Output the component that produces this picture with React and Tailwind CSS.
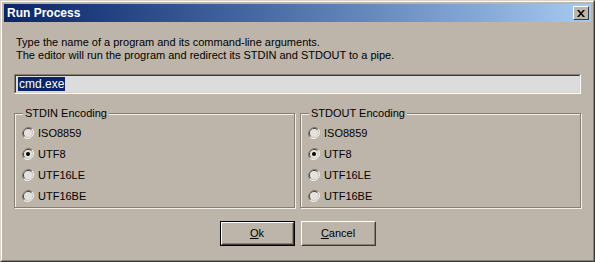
import React from "react";

const font = { fontFamily: '"Liberation Sans", Arial, sans-serif' };

const Radio = ({ checked }) => (
    <svg width="12" height="12" viewBox="0 0 12 12" className="shrink-0">
        <path d="M10.2 1.8 A6 6 0 0 0 1.8 10.2" fill="none" stroke="#807a70" strokeWidth="1" />
        <path d="M1.8 10.2 A6 6 0 0 0 10.2 1.8" fill="none" stroke="#f4f2ee" strokeWidth="1" />
        <path d="M9.5 2.5 A5 5 0 0 0 2.5 9.5" fill="none" stroke="#3c3a36" strokeWidth="1" />
        <path d="M2.5 9.5 A5 5 0 0 0 9.5 2.5" fill="none" stroke="#d6d0c6" strokeWidth="1" />
        <circle cx="6" cy="6" r="4" fill="#e4e2de" />
        {checked && <circle cx="6" cy="6" r="2" fill="#000" />}
    </svg>
);

const Group = ({ title, options, selected }) => (
    <div className="relative flex-1 h-[95px] border border-[#857f74] shadow-[inset_1px_1px_0_#f2efe9,1px_1px_0_#f2efe9]">
        {/* titel over de lijn */}
        <span className="absolute left-[8px] top-[-7px] px-[2px] bg-[#bdb5a9] text-[11px] leading-[13px] text-black">
            {title}
        </span>
        <div className="flex flex-col pt-[13px] pl-[7px] gap-[9px]">
            {options.map((opt) => (
                <div key={opt} className="flex items-center gap-[4px] h-[12px]">
                    <Radio checked={opt === selected} />
                    <span className="text-[11px] leading-[12px] text-black">{opt}</span>
                </div>
            ))}
        </div>
    </div>
);

const Button = ({ children, isDefault }) => (
    <div className={`w-[75px] h-[25px] ${isDefault ? "border border-black" : ""}`}>
        <div className="w-full h-full border border-t-white border-l-white border-r-[#3c3a36] border-b-[#3c3a36]">
            <div className="w-full h-full border border-t-[#bdb5a9] border-l-[#bdb5a9] border-r-[#857f74] border-b-[#857f74] flex items-center justify-center text-[11px] text-black">
                {children}
            </div>
        </div>
    </div>
);

export default function App() {
    const options = ["ISO8859", "UTF8", "UTF16LE", "UTF16BE"];

    return (
        <div
            style={font}
            className="w-[595px] h-[262px] bg-[#bdb5a9] border border-t-[#d8d2c8] border-l-[#d8d2c8] border-r-[#3c3a36] border-b-[#3c3a36]"
        >
            <div className="w-full h-full border border-t-white border-l-white border-r-[#857f74] border-b-[#857f74] p-[2px] flex flex-col">
                {/* titelbalk */}
                <div className="h-[18px] flex items-center justify-between bg-gradient-to-r from-[#0a246a] to-[#a6caf0] pl-[3px] pr-[2px]">
                    <span className="text-white font-bold text-[12px] leading-[14px]">Run Process</span>
                    <div className="w-[16px] h-[14px] bg-[#bdb5a9] border border-t-white border-l-white border-r-[#3c3a36] border-b-[#3c3a36] flex items-center justify-center">
                        <svg width="8" height="7" viewBox="0 0 8 7">
                            <path d="M0 0h2l2 2.5 2-2.5h2l-3 3.5 3 3.5h-2l-2-2.5-2 2.5h-2l3-3.5z" fill="#000" />
                        </svg>
                    </div>
                </div>

                <div className="flex flex-col px-[10px]">
                    <div className="mt-[14px] pl-[2px] text-[11px] leading-[13px] text-black">
                        <p>Type the name of a program and its command-line arguments.</p>
                        <p>The editor will run the program and redirect its STDIN and STDOUT to a pipe.</p>
                    </div>

                    {/* invoerveld */}
                    <div className="mt-[12px] h-[20px] border border-t-[#857f74] border-l-[#857f74] border-r-white border-b-white">
                        <div className="w-full h-full border border-t-[#3c3a36] border-l-[#3c3a36] border-r-[#d8d2c8] border-b-[#d8d2c8] bg-[#dcdcdc] flex items-center pl-[2px]">
                            <span className="bg-[#0a246a] text-white text-[12px] leading-[14px] px-[1px]">cmd.exe</span>
                        </div>
                    </div>

                    <div className="mt-[19px] flex gap-[5px]">
                        <Group title="STDIN Encoding" options={options} selected="UTF8" />
                        <Group title="STDOUT Encoding" options={options} selected="UTF8" />
                    </div>

                    <div className="mt-[13px] flex justify-center gap-[6px]">
                        <Button isDefault>
                            <span><span className="underline">O</span>k</span>
                        </Button>
                        <Button>
                            <span><span className="underline">C</span>ancel</span>
                        </Button>
                    </div>
                </div>
            </div>
        </div>
    );
}
